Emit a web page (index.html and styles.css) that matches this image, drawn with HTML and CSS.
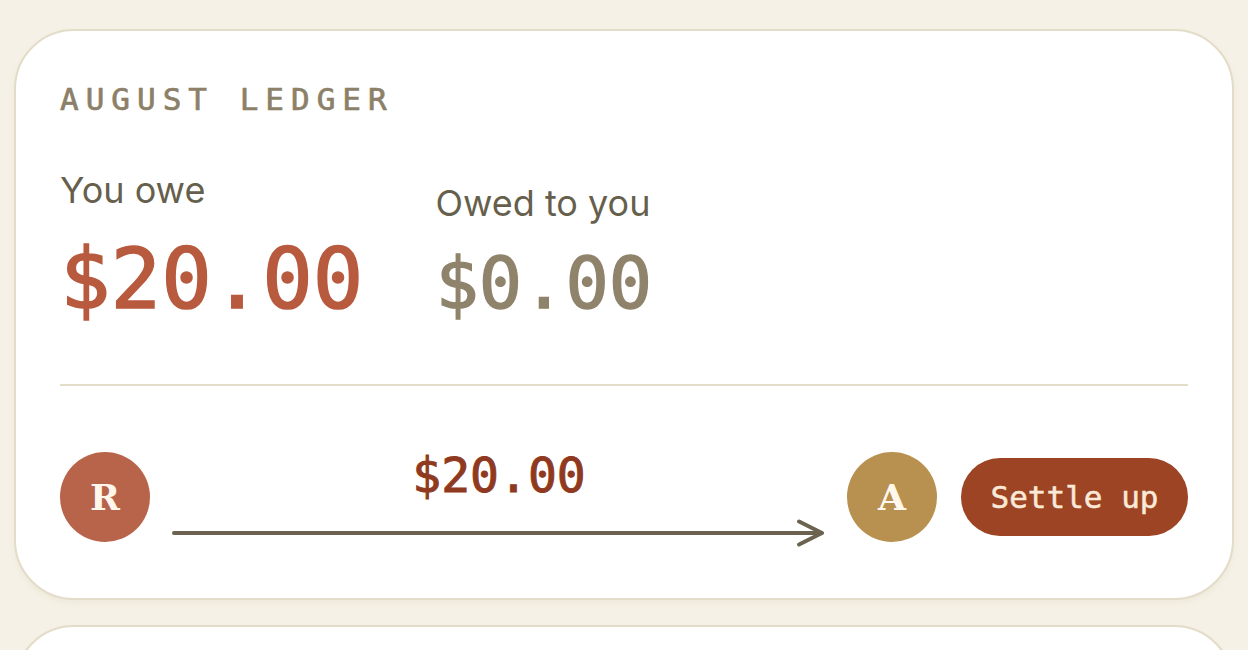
FILE: index.html
```html
<!DOCTYPE html>
<html lang="en">
<head>
  <meta charset="UTF-8" />
  <meta name="viewport" content="width=device-width, initial-scale=1.0" />
  <title>August Ledger</title>
  <link rel="stylesheet" href="styles.css">
</head>
<body>
  <main class="page">
    <section class="card">
      <h2 class="card-title">August Ledger</h2>

      <div class="totals">
        <div class="total total-owe">
          <p class="total-label">You owe</p>
          <p class="total-amount">$20.00</p>
        </div>
        <div class="total total-owed">
          <p class="total-label">Owed to you</p>
          <p class="total-amount">$0.00</p>
        </div>
      </div>

      <div class="transfer">
        <span class="avatar avatar-r">R</span>
        <div class="transfer-flow">
          <span class="transfer-amount">$20.00</span>
          <svg class="transfer-arrow" viewBox="0 0 656 28" preserveAspectRatio="none">
            <path d="M2 14 H652 M629 2.5 L652 14 L629 25.5" fill="none" stroke="#6b634f" stroke-width="4" stroke-linecap="round" stroke-linejoin="round" />
          </svg>
        </div>
        <span class="avatar avatar-a">A</span>
        <button class="settle-btn">Settle up</button>
      </div>
    </section>

    <section class="card card-next"></section>
  </main>
</body>
</html>
```

FILE: styles.css
```css
body {
  margin: 0;
  padding: 0;
  background: #f6f1e6;
  font-family: Inter, Roboto, "Liberation Sans", sans-serif;
  color: #6b6250;
}
.page {
  padding: 29px 14px 0;
}
.card {
  background: #fff;
  border: 2px solid #e3dcc8;
  border-radius: 60px;
  padding: 48px 44px 51px;
  box-shadow: 0 3px 6px rgba(120, 100, 60, 0.06);
}
.card-next {
  margin-top: 25px;
  height: 120px;
  padding: 0;
}
.card-title {
  margin: 0;
  font-family: "DejaVu Sans Mono", "Liberation Mono", monospace;
  font-size: 31px;
  font-weight: normal;
  -webkit-text-stroke: 0.7px #8c8068;
  letter-spacing: 7px;
  text-transform: uppercase;
  color: #8c8068;
  line-height: 40px;
}
.totals {
  display: flex;
  align-items: flex-start;
  gap: 72px;
  margin-top: 51px;
  padding-bottom: 60px;
  border-bottom: 2px solid #e3dcc8;
}
.total-label {
  margin: 0;
  font-size: 36px;
  line-height: 40px;
  color: #675f4d;
}
.total-amount {
  margin: 24px 0 0;
  font-family: "DejaVu Sans Mono", "Liberation Mono", monospace;
  font-size: 84px;
  line-height: 90px;
  color: #b85a3e;
  -webkit-text-stroke: 1.6px #b85a3e;
}
.total-owed {
  margin-top: 13px;
}
.total-owed .total-amount {
  font-size: 72px;
  line-height: 80px;
  margin-top: 20px;
  color: #8f836b;
  -webkit-text-stroke: 1.4px #8f836b;
}
.transfer {
  display: flex;
  align-items: center;
  margin-top: 61px;
}
.avatar {
  width: 90px;
  height: 90px;
  border-radius: 50%;
  display: flex;
  align-items: center;
  justify-content: center;
  flex-shrink: 0;
  font-family: "DejaVu Serif", "Liberation Serif", serif;
  font-weight: bold;
  font-size: 36px;
  color: #fff7ec;
}
.avatar-r {
  background: #b8644a;
}
.avatar-a {
  background: #b8904f;
  margin-left: 21px;
}
.transfer-flow {
  flex: 1;
  margin-left: 22px;
  display: flex;
  flex-direction: column;
  align-items: center;
  padding-top: 2px;
}
.transfer-amount {
  font-family: "DejaVu Sans Mono", "Liberation Mono", monospace;
  font-size: 48px;
  line-height: 52px;
  color: #8f3a20;
  -webkit-text-stroke: 1px #8f3a20;
}
.transfer-arrow {
  width: 100%;
  height: 28px;
  margin-top: 18px;
  display: block;
}
.settle-btn {
  margin-left: 24px;
  height: 78px;
  width: 227px;
  padding: 0;
  border: none;
  border-radius: 39px;
  background: #9c4424;
  color: #fbe9d8;
  font-family: "DejaVu Sans Mono", "Liberation Mono", monospace;
  font-size: 31px;
  -webkit-text-stroke: 0.5px #fbe9d8;
  cursor: pointer;
}
```
